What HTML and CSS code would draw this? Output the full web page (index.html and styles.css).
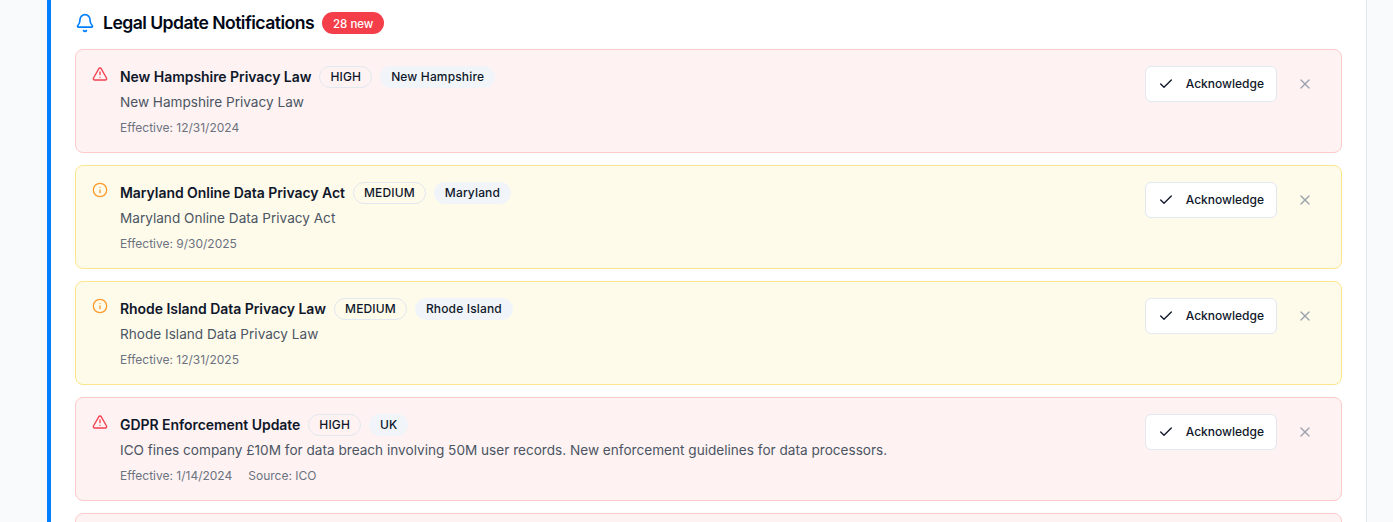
FILE: index.html
```html
<!DOCTYPE html>
<html lang="en">
<head>
<meta charset="utf-8">
<title>Legal Update Notifications</title>
<link rel="stylesheet" href="styles.css">
</head>
<body>
<main class="panel">
  <header class="panel-head">
    <svg class="bell" viewBox="0 0 24 24" fill="none" stroke="currentColor" stroke-width="2" stroke-linecap="round" stroke-linejoin="round"><path d="M10.268 21a2 2 0 0 0 3.464 0"/><path d="M3.262 15.326A1 1 0 0 0 4 17h16a1 1 0 0 0 .74-1.673C19.41 13.956 18 12.499 18 8A6 6 0 0 0 6 8c0 4.499-1.411 5.956-2.738 7.326"/></svg>
    <h2 class="panel-title">Legal Update Notifications</h2>
    <span class="count">28 new</span>
  </header>
  <div class="list">
    <article class="item high">
      <svg class="sev" viewBox="0 0 24 24" fill="none" stroke="currentColor" stroke-width="2" stroke-linecap="round" stroke-linejoin="round"><path d="m21.73 18-8-14a2 2 0 0 0-3.48 0l-8 14A2 2 0 0 0 4 21h16a2 2 0 0 0 1.73-3"/><path d="M12 9v4"/><path d="M12 17h.01"/></svg>
      <div class="body">
        <div class="title-row"><h3 class="title">New Hampshire Privacy Law</h3><span class="pill">HIGH</span><span class="pill soft">New Hampshire</span></div>
        <p class="desc">New Hampshire Privacy Law</p>
        <p class="meta"><span>Effective: 12/31/2024</span></p>
      </div>
      <div class="actions">
        <button class="ack"><svg viewBox="0 0 24 24" fill="none" stroke="currentColor" stroke-width="2" stroke-linecap="round" stroke-linejoin="round"><path d="M20 6 9 17l-5-5"/></svg>Acknowledge</button>
        <button class="close" aria-label="Dismiss"><svg viewBox="0 0 24 24" fill="none" stroke="currentColor" stroke-width="2" stroke-linecap="round" stroke-linejoin="round"><path d="M18 6 6 18"/><path d="m6 6 12 12"/></svg></button>
      </div>
    </article>
    <article class="item medium">
      <svg class="sev" viewBox="0 0 24 24" fill="none" stroke="currentColor" stroke-width="2" stroke-linecap="round" stroke-linejoin="round"><circle cx="12" cy="12" r="10"/><path d="M12 16v-4"/><path d="M12 8h.01"/></svg>
      <div class="body">
        <div class="title-row"><h3 class="title">Maryland Online Data Privacy Act</h3><span class="pill">MEDIUM</span><span class="pill soft">Maryland</span></div>
        <p class="desc">Maryland Online Data Privacy Act</p>
        <p class="meta"><span>Effective: 9/30/2025</span></p>
      </div>
      <div class="actions">
        <button class="ack"><svg viewBox="0 0 24 24" fill="none" stroke="currentColor" stroke-width="2" stroke-linecap="round" stroke-linejoin="round"><path d="M20 6 9 17l-5-5"/></svg>Acknowledge</button>
        <button class="close" aria-label="Dismiss"><svg viewBox="0 0 24 24" fill="none" stroke="currentColor" stroke-width="2" stroke-linecap="round" stroke-linejoin="round"><path d="M18 6 6 18"/><path d="m6 6 12 12"/></svg></button>
      </div>
    </article>
    <article class="item medium">
      <svg class="sev" viewBox="0 0 24 24" fill="none" stroke="currentColor" stroke-width="2" stroke-linecap="round" stroke-linejoin="round"><circle cx="12" cy="12" r="10"/><path d="M12 16v-4"/><path d="M12 8h.01"/></svg>
      <div class="body">
        <div class="title-row"><h3 class="title">Rhode Island Data Privacy Law</h3><span class="pill">MEDIUM</span><span class="pill soft">Rhode Island</span></div>
        <p class="desc">Rhode Island Data Privacy Law</p>
        <p class="meta"><span>Effective: 12/31/2025</span></p>
      </div>
      <div class="actions">
        <button class="ack"><svg viewBox="0 0 24 24" fill="none" stroke="currentColor" stroke-width="2" stroke-linecap="round" stroke-linejoin="round"><path d="M20 6 9 17l-5-5"/></svg>Acknowledge</button>
        <button class="close" aria-label="Dismiss"><svg viewBox="0 0 24 24" fill="none" stroke="currentColor" stroke-width="2" stroke-linecap="round" stroke-linejoin="round"><path d="M18 6 6 18"/><path d="m6 6 12 12"/></svg></button>
      </div>
    </article>
    <article class="item high">
      <svg class="sev" viewBox="0 0 24 24" fill="none" stroke="currentColor" stroke-width="2" stroke-linecap="round" stroke-linejoin="round"><path d="m21.73 18-8-14a2 2 0 0 0-3.48 0l-8 14A2 2 0 0 0 4 21h16a2 2 0 0 0 1.73-3"/><path d="M12 9v4"/><path d="M12 17h.01"/></svg>
      <div class="body">
        <div class="title-row"><h3 class="title">GDPR Enforcement Update</h3><span class="pill">HIGH</span><span class="pill soft">UK</span></div>
        <p class="desc">ICO fines company £10M for data breach involving 50M user records. New enforcement guidelines for data processors.</p>
        <p class="meta"><span>Effective: 1/14/2024</span><span>Source: ICO</span></p>
      </div>
      <div class="actions">
        <button class="ack"><svg viewBox="0 0 24 24" fill="none" stroke="currentColor" stroke-width="2" stroke-linecap="round" stroke-linejoin="round"><path d="M20 6 9 17l-5-5"/></svg>Acknowledge</button>
        <button class="close" aria-label="Dismiss"><svg viewBox="0 0 24 24" fill="none" stroke="currentColor" stroke-width="2" stroke-linecap="round" stroke-linejoin="round"><path d="M18 6 6 18"/><path d="m6 6 12 12"/></svg></button>
      </div>
    </article>
    <article class="item high"></article>
  </div>
</main>
</body>
</html>
```
FILE: styles.css
```css
* { box-sizing: border-box; }
html, body { margin: 0; height: 100%; }
body {
  background: #f8fafc;
  font-family: Inter, "Liberation Sans", sans-serif;
  font-optical-sizing: none;
  color: #0f172a;
  overflow: hidden;
  padding: 0 26px 0 47px;
}
.panel {
  background: #fff;
  border-left: 4px solid #0080ff;
  border-right: 1px solid #e2e8f0;
  padding: 9px 24px 0;
  height: 522px;
  overflow: hidden;
}
.panel-head {
  display: flex;
  align-items: center;
  height: 28px;
  margin-bottom: 12px;
}
.bell { width: 20px; height: 20px; color: #0080ff; margin-right: 8px; flex: none; }
.panel-title { margin: 0; font-size: 17.6px; line-height: 28px; font-weight: 600; letter-spacing: -0.55px; color: #020817; }
.count {
  margin-left: 8px;
  background: #f43f4a;
  color: #fff;
  font-size: 11.5px;
  line-height: 16px;
  font-weight: 500;
  padding: 3px 10px;
  border-radius: 999px;
  border: 1px solid transparent;
  height: 22px;
}
.list { display: flex; flex-direction: column; gap: 12px; }
.item {
  display: flex;
  align-items: flex-start;
  gap: 12px;
  padding: 16px;
  height: 104px;
  flex: none;
  border: 1px solid;
  border-radius: 8px;
}
.high { background: #fef2f2; border-color: #fecaca; }
.medium { background: #fffbeb; border-color: #fde68a; }
.sev { width: 16px; height: 16px; flex: none; }
.high .sev { color: #f43f4f; }
.medium .sev { color: #fb9a2c; }
.body { flex: 1; min-width: 0; }
.title-row { display: flex; align-items: center; gap: 8px; height: 22px; }
.title { margin: 0; font-size: 14px; line-height: 20px; font-weight: 600; letter-spacing: -0.05px; }
.pill {
  font-size: 12px;
  line-height: 16px;
  font-weight: 500;
  letter-spacing: 0.15px;
  padding: 2px 10px;
  border: 1px solid #e2e8f0;
  border-radius: 999px;
  height: 22px;
}
.pill.soft { background: #f1f5f9; border-color: transparent; color: #0f172a; }
.desc { margin: 4px 0 0; font-size: 13.6px; line-height: 20px; color: #4b5563; }
.meta { margin: 8px 0 0; display: flex; gap: 16px; font-size: 12px; line-height: 16px; color: #6b7280; }
.actions { display: flex; gap: 8px; flex: none; }
.ack {
  display: flex;
  align-items: center;
  gap: 12px;
  height: 36px;
  padding: 0 12px;
  background: #fff;
  border: 1px solid #e2e8f0;
  border-radius: 6px;
  font: 500 12px/16px Inter, "Liberation Sans", sans-serif;
  font-optical-sizing: none;
  color: #0f172a;
}
.ack svg { width: 16px; height: 16px; flex: none; }
.close {
  display: flex;
  align-items: center;
  justify-content: center;
  width: 40px;
  height: 36px;
  padding: 0;
  background: transparent;
  border: 0;
  color: #9ca3af;
}
.close svg { width: 16px; height: 16px; }
```
